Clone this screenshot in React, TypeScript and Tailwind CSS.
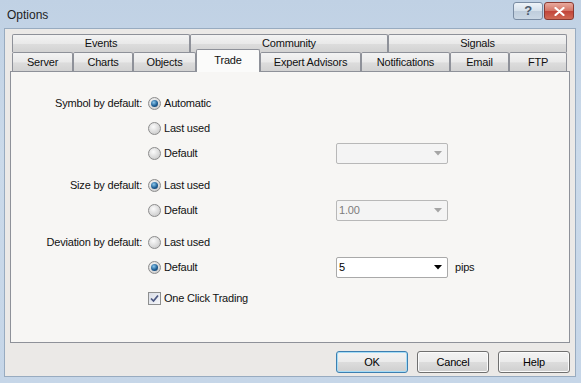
import React from 'react';

const font = { fontFamily: '"Liberation Sans", Arial, sans-serif' };

const row1 = [
  { label: 'Events', w: 'w-[178px]' },
  { label: 'Community', w: 'w-[198px]' },
  { label: 'Signals', w: 'w-[179px]' },
];

const row2 = [
  { label: 'Server', w: 'w-[61px]' },
  { label: 'Charts', w: 'w-[60px]' },
  { label: 'Objects', w: 'w-[63px]' },
  { label: 'Trade', w: 'w-[64px]', active: true },
  { label: 'Expert Advisors', w: 'w-[101px]' },
  { label: 'Notifications', w: 'w-[89px]' },
  { label: 'Email', w: 'w-[59px]' },
  { label: 'FTP', w: 'w-[58px]' },
];

const Radio = ({ checked }: { checked?: boolean }) => (
  <span className="w-[13px] h-[13px] shrink-0 rounded-full border border-[#8c8c8c] bg-[radial-gradient(circle_at_40%_35%,#fbfbfb,#d2d2d2_70%,#bdbdbd)] flex items-center justify-center">
    {checked && (
      <span className="w-[7px] h-[7px] rounded-full bg-[radial-gradient(circle_at_40%_35%,#8cc9ee,#1f5f95_55%,#0b2f57)]" />
    )}
  </span>
);

const Checkbox = () => (
  <span className="w-[13px] h-[13px] shrink-0 border border-[#8e8f8f] bg-[linear-gradient(135deg,#d9dde6,#f6f7fa)] flex items-center justify-center">
    <svg width="9" height="9" viewBox="0 0 9 9">
      <path d="M1 4.5 L3.5 7 L8 1.5" fill="none" stroke="#4a5680" strokeWidth="1.7" />
    </svg>
  </span>
);

const Combo = ({ value, disabled }: { value?: string; disabled?: boolean }) => (
  <div
    className={`w-[112px] h-[21px] shrink-0 flex items-center justify-between pl-[2px] pr-[5px] border rounded-[2px] ${
      disabled ? 'border-[#b8b8b8] bg-[#f4f4f4] text-[#7c7c7c]' : 'border-[#a9a9a9] bg-white text-black'
    }`}
  >
    <span>{value}</span>
    <svg width="8" height="5" viewBox="0 0 8 5">
      <polygon points="0,0 8,0 4,4.5" fill={disabled ? '#a5a5a5' : '#000'} />
    </svg>
  </div>
);

const Option = ({
  label,
  text,
  checked,
  extra,
}: {
  label?: string;
  text: string;
  checked?: boolean;
  extra?: React.ReactNode;
}) => (
  <div className="h-[25px] flex items-center">
    <div className="w-[132px] text-right pr-px">{label}</div>
    <div className="w-[188px] ml-[5px] flex items-center gap-[3px]">
      <Radio checked={checked} />
      <span>{text}</span>
    </div>
    {extra}
  </div>
);

const Button = ({ children, primary }: { children: React.ReactNode; primary?: boolean }) => (
  <button
    className={`w-[72px] h-[22px] rounded-[3px] border bg-[linear-gradient(#f3f3f3_0%,#ebebeb_48%,#dcdcdc_52%,#cfcfcf_100%)] text-black ${
      primary ? 'border-[#3c7fb1] shadow-[inset_0_0_0_1px_#a6dcf6]' : 'border-[#707070] shadow-[inset_0_0_0_1px_#fbfbfb]'
    }`}
  >
    {children}
  </button>
);

export default function App() {
  return (
    <div
      style={font}
      className="w-[581px] h-[383px] bg-[linear-gradient(#c0d1e4,#cbdaea_40%,#c6d6e8)] flex flex-col text-[11px] tracking-[-0.2px] text-[#111]"
    >
      {/* title bar */}
      <div className="h-[28px] flex items-start justify-between pl-[7px] pr-[7px]">
        <span className="mt-[6px] text-[12px] tracking-normal text-[#1e1e1e]">Options</span>
        <div className="flex mt-[2px] gap-px">
          <div className="w-[30px] h-[18px] rounded-[3px] border border-[#7a8ca3] bg-[linear-gradient(#eef3f8,#d5e0eb_50%,#bfcddc_52%,#cad7e4)] flex items-center justify-center text-[13px] font-bold text-[#4b5b6d]">
            ?
          </div>
          <div className="w-[30px] h-[18px] rounded-[3px] border border-[#8a3a32] bg-[linear-gradient(#e8a99d,#d47566_48%,#c2453a_52%,#cf6a55)] flex items-center justify-center">
            <svg width="11" height="9" viewBox="0 0 11 9">
              <path d="M1.5 1 L9.5 8 M9.5 1 L1.5 8" stroke="#fff" strokeWidth="2.2" strokeLinecap="round" />
            </svg>
          </div>
        </div>
      </div>

      {/* client area */}
      <div className="flex-1 ml-[4px] mr-[5px] mb-[6px] border border-[#98abc0] bg-[#ebe9e7] px-[5px] pt-[5px] flex flex-col">
        {/* tabs */}
        <div className="pl-[2px] flex flex-col">
          <div className="flex h-[18px]">
            {row1.map((t) => (
              <div
                key={t.label}
                className={`${t.w} border border-b-0 border-[#8e9199] rounded-t-[2px] bg-[linear-gradient(#f3f3f3,#e9e9e9_50%,#dcdcdc_55%,#d2d2d2)] flex items-center justify-center`}
              >
                {t.label}
              </div>
            ))}
          </div>
          <div className="flex h-[19px] items-end">
            {row2.map((t) =>
              t.active ? (
                <div
                  key={t.label}
                  className={`${t.w} h-[23px] -mb-px relative z-10 border border-b-0 border-[#8e9199] rounded-t-[2px] bg-[#fbfbfa] flex items-center justify-center pb-[2px]`}
                >
                  {t.label}
                </div>
              ) : (
                <div
                  key={t.label}
                  className={`${t.w} h-[19px] border border-b-0 border-[#8e9199] rounded-t-[2px] bg-[linear-gradient(#f3f3f3,#e9e9e9_50%,#dcdcdc_55%,#d2d2d2)] flex items-center justify-center`}
                >
                  {t.label}
                </div>
              )
            )}
          </div>
        </div>

        {/* panel */}
        <div className="h-[272px] border border-[#8e9199] bg-[#f7f6f4] pt-[19px]">
          <Option label="Symbol by default:" text="Automatic" checked />
          <Option text="Last used" />
          <Option text="Default" extra={<Combo disabled />} />

          <div className="mt-[7px]">
            <Option label="Size by default:" text="Last used" checked />
            <Option text="Default" extra={<Combo disabled value="1.00" />} />
          </div>

          <div className="mt-[7px]">
            <Option label="Deviation by default:" text="Last used" />
            <Option
              text="Default"
              checked
              extra={
                <>
                  <Combo value="5" />
                  <span className="ml-[7px]">pips</span>
                </>
              }
            />
          </div>

          <div className="mt-[6px] h-[25px] flex items-center">
            <div className="w-[132px]" />
            <div className="ml-[5px] flex items-center gap-[3px]">
              <Checkbox />
              <span>One Click Trading</span>
            </div>
          </div>
        </div>

        {/* buttons */}
        <div className="mt-[8px] flex justify-end gap-[9px]">
          <Button primary>OK</Button>
          <Button>Cancel</Button>
          <Button>Help</Button>
        </div>
      </div>
    </div>
  );
}
